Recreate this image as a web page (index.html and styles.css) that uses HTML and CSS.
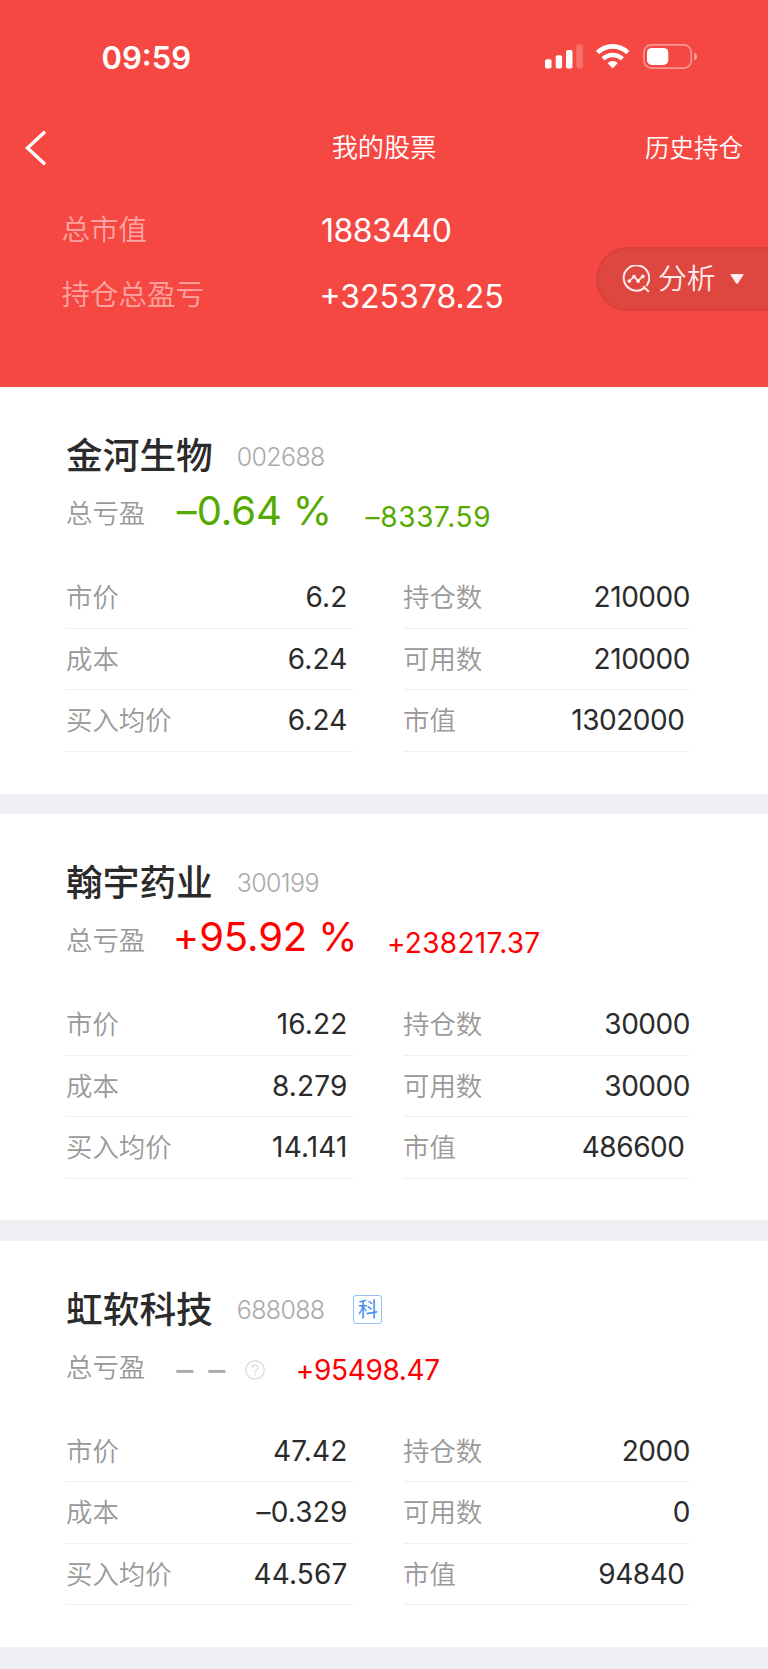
FILE: index.html
```html
<!DOCTYPE html>
<html lang="zh-CN">
<head>
<meta charset="utf-8">
<title>我的股票</title>
<link rel="stylesheet" href="styles.css">
</head>
<body>
<header class="header">
  <div class="status">
    <span class="time">09:59</span>
    <svg class="status-icons" width="153" height="26" viewBox="0 0 153 26" fill="#fff">
      <rect x="0" y="15.2" width="6.6" height="9.4" rx="1.8"/>
      <rect x="10.7" y="11.2" width="6.4" height="13.4" rx="1.8"/>
      <rect x="21" y="6" width="6.5" height="18.6" rx="1.8"/>
      <rect x="31.3" y=".2" width="6.6" height="24.4" rx="1.8" opacity=".22"/>
      <g fill="none" stroke="#fff" stroke-width="4.6">
        <path d="M52.6 8.6A21.5 21.5 0 0 1 82.8 8.6"/>
        <path d="M58.1 14.9A13.6 13.6 0 0 1 77.3 14.9"/>
      </g>
      <path d="M62.6 19.1A7.4 7.4 0 0 1 72.8 19.1L67.7 24.6Z"/>
      <rect x="98.9" y=".9" width="47.4" height="23.2" rx="7.4" fill="none" stroke="#fff" stroke-width="1.7" opacity=".42"/>
      <rect x="102" y="3.9" width="21.3" height="17.1" rx="4.8"/>
      <path d="M149.2 8.4Q152 9.6 152 12.5T149.2 16.6Z" opacity=".5"/>
    </svg>
  </div>
  <nav class="nav">
    <svg class="back" width="22" height="36" viewBox="0 0 22 36" fill="none" stroke="#fff" stroke-width="3.4"><path d="M20 1.8L2.4 18L20 34.2"/></svg>
    <h1 class="title">我的股票</h1>
    <span class="history">历史持仓</span>
  </nav>
  <div class="summary">
    <span class="sum-label">总市值</span><span class="sum-value sum-total">1883440</span>
    <span class="sum-label">持仓总盈亏</span><span class="sum-value">+325378.25</span>
  </div>
  <div class="analysis">
    <svg width="28" height="28" viewBox="0 0 28 28" fill="none" stroke="#fdeceb" stroke-width="2" stroke-linecap="round" stroke-linejoin="round">
      <path d="M21.7 23.4A12.7 12.7 0 1 1 24.9 20.2M21.8 21.8L26.2 26.2"/>
      <path d="M7.6 15.9L12 11.6L16.1 15.9L20.6 11.4" stroke-width="1.7"/>
      <g fill="#fdeceb" stroke="none"><circle cx="7.3" cy="16.1" r="1.9"/><circle cx="12" cy="11.6" r="1.9"/><circle cx="16.1" cy="16" r="1.9"/><circle cx="20.8" cy="11.4" r="1.9"/></g>
    </svg>
    <span class="analysis-text">分析</span>
    <svg width="14" height="10" viewBox="0 0 14 10" fill="#fdeceb"><path d="M1.2 0H12.8Q14 0 13.4 1L8 9.2Q7 10.4 6 9.2L.6 1Q0 0 1.2 0Z"/></svg>
  </div>
</header>
<main class="list">
  <section class="card">
    <div class="head"><h2 class="name">金河生物</h2><span class="code">002688</span></div>
    <div class="profit down"><span class="label">总亏盈</span><span class="pct">–0.64 %</span><span class="amount loose">–8337.59</span></div>
    <div class="cols">
      <dl class="col"><div class="row"><dt>市价</dt><dd>6.2</dd></div><div class="row"><dt>成本</dt><dd>6.24</dd></div><div class="row"><dt>买入均价</dt><dd>6.24</dd></div></dl>
      <dl class="col qty"><div class="row"><dt>持仓数</dt><dd>210000</dd></div><div class="row"><dt>可用数</dt><dd>210000</dd></div><div class="row"><dt>市值</dt><dd>1302000</dd></div></dl>
    </div>
  </section>
  <section class="card">
    <div class="head"><h2 class="name">翰宇药业</h2><span class="code">300199</span></div>
    <div class="profit up"><span class="label">总亏盈</span><span class="pct">+95.92 %</span><span class="amount">+238217.37</span></div>
    <div class="cols">
      <dl class="col"><div class="row"><dt>市价</dt><dd>16.22</dd></div><div class="row"><dt>成本</dt><dd>8.279</dd></div><div class="row"><dt>买入均价</dt><dd>14.141</dd></div></dl>
      <dl class="col qty"><div class="row"><dt>持仓数</dt><dd>30000</dd></div><div class="row"><dt>可用数</dt><dd>30000</dd></div><div class="row"><dt>市值</dt><dd>486600</dd></div></dl>
    </div>
  </section>
  <section class="card">
    <div class="head"><h2 class="name">虹软科技</h2><span class="code">688088</span><span class="badge">科</span></div>
    <div class="profit up"><span class="label">总亏盈</span><span class="none">– –</span>
      <svg class="help" width="20" height="20" viewBox="0 0 20 20" fill="none" stroke="#dedede" stroke-width="1.4"><circle cx="10" cy="10" r="9.2"/><path d="M7.2 8A2.8 2.8 0 1 1 11.4 10.2Q10 11 10 12.4M10 13.8V15.3"/></svg>
      <span class="amount tight">+95498.47</span></div>
    <div class="cols">
      <dl class="col"><div class="row"><dt>市价</dt><dd>47.42</dd></div><div class="row"><dt>成本</dt><dd>–0.329</dd></div><div class="row"><dt>买入均价</dt><dd>44.567</dd></div></dl>
      <dl class="col qty"><div class="row"><dt>持仓数</dt><dd>2000</dd></div><div class="row"><dt>可用数</dt><dd>0</dd></div><div class="row"><dt>市值</dt><dd>94840</dd></div></dl>
    </div>
  </section>
</main>
</body>
</html>
```
FILE: styles.css
```css
* { box-sizing: border-box; margin: 0; padding: 0; }
body {
  width: 768px;
  height: 1669px;
  overflow: hidden;
  background: #efeff4;
  color: #2b2b2b;
  font-family: "Inter", "Noto Sans CJK SC", sans-serif;
  line-height: 1.2;
  white-space: nowrap;
}

/* Header */
.header { position: relative; height: 387.3px; background: #f64843; color: #fff; }
.status { display: flex; justify-content: space-between; align-items: center; height: 115px; padding: 0 70px 0 101.5px; }
.time { font-size: 31px; font-weight: 600; }
.status-icons { display: block; margin-bottom: 1px; }
.nav { display: grid; grid-template-columns: 1fr auto 1fr; align-items: center; height: 65px; padding: 0 25px 0 25px; }
.title { padding-top: 1px; font-size: 26.2px; font-weight: 350; }
.history { justify-self: end; padding-top: 2px; font-size: 24.5px; font-weight: 350; }
.summary { display: grid; grid-template-columns: 259px auto; grid-auto-rows: 65.3px; align-items: center; padding: 17px 0 0 61.5px; }
.sum-label { font-size: 28.5px; font-weight: 350; color: #fba4a1; }
.sum-value { font-size: 32px; padding-top: 5px; margin-left: -1px; }
.sum-total { padding-top: 4px; letter-spacing: -.5px; margin-left: .5px; }
.analysis {
  position: absolute;
  top: 247px;
  right: 0;
  display: flex;
  align-items: center;
  width: 172px;
  height: 64px;
  padding-left: 24px;
  border: 2px solid #da3f3b;
  border-right: 0;
  border-radius: 32px 0 0 32px;
  background: #de473f;
  color: #fdeceb;
}
.analysis-text { margin: 0 14px 0 8px; font-size: 28.8px; font-weight: 350; }

/* Stock cards */
.list { display: grid; gap: 20.3px; }
.card { height: 406.4px; padding: 42px 78px 0 66px; background: #fff; }
.head { display: flex; align-items: center; height: 54px; }
.name { font-size: 36.7px; font-weight: 500; }
.code { margin-left: 24px; padding-top: 1px; font-size: 25px; font-weight: 300; letter-spacing: -.65px; color: #aaa; }
.badge {
  margin-left: 29px;
  width: 29px;
  height: 29px;
  border: 1px solid #8fc0f8;
  border-radius: 3px;
  color: #3f8fe8;
  font-size: 20px;
  line-height: 28px;
  text-align: center;
}
.profit { display: flex; align-items: center; height: 68px; }
.label { padding-bottom: 6px; font-size: 26.4px; font-weight: 350; color: #999; }
.pct { margin-left: 27.6px; padding-bottom: 13px; font-size: 40px; letter-spacing: -.1px; }
.amount { margin-left: 29.5px; font-size: 28px; letter-spacing: .3px; }
.up .pct, .up .amount { color: #f00; }
.down .pct, .down .amount { padding-left: 4px; color: #5a0; }
.amount.loose { letter-spacing: .68px; }
.amount.tight { letter-spacing: -.35px; margin-left: 31px; }
.none { margin-left: 31px; padding-bottom: 1px; font-size: 34px; color: #aaa; word-spacing: 5.6px; }
.help { display: block; margin: 0 0 2px 19.5px; }
.cols { display: grid; grid-template-columns: 286.5px 287px; justify-content: space-between; padding-top: 16.2px; }
.row { display: flex; justify-content: space-between; align-items: center; height: 61.5px; padding-top: 1px; border-bottom: 1px solid #efefef; }
.row dt { font-size: 26.4px; font-weight: 350; color: #999; }
.row dd { padding-right: 5px; font-size: 28px; letter-spacing: .15px; }
.qty dd { padding-right: 0; letter-spacing: -.45px; }
.qty .row:last-child dd { padding-right: 5.5px; }
```
